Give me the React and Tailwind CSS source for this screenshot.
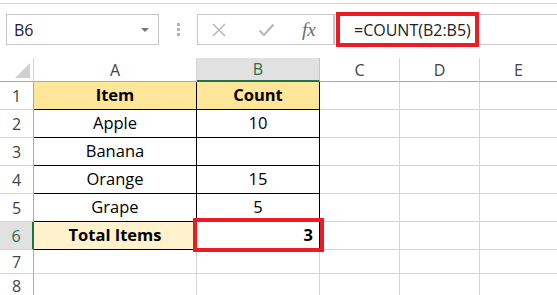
import React from "react";

const font = { fontFamily: '"Open Sans", "Noto Sans", sans-serif' };

const rows = [
  { n: 1, a: "Item", b: "Count", head: true },
  { n: 2, a: "Apple", b: "10" },
  { n: 3, a: "Banana", b: "" },
  { n: 4, a: "Orange", b: "15" },
  { n: 5, a: "Grape", b: "5" },
];

function Empty({ h }) {
  return (
    <>
      <div className={`border-r border-b border-[#d4d4d4] ${h}`} />
      <div className={`border-r border-b border-[#d4d4d4] ${h}`} />
      <div className={`border-b border-[#d4d4d4] ${h}`} />
    </>
  );
}

export default function App() {
  return (
    <div className="w-[557px] h-[295px] overflow-hidden bg-white text-black" style={font}>
      {/* formula bar area */}
      <div className="h-[58px] flex flex-col">
        <div className="h-[4px] border-b border-[#d4d4d4]" />
        <div className="flex items-center pt-[10px] h-[41px]">
          <div className="ml-[6px] w-[153px] h-[31px] border border-[#c6c6c6] flex items-center justify-between pl-[7px] pr-[9px]">
            <span className="text-[16px] text-[#222]">B6</span>
            <span className="w-0 h-0 border-l-[4px] border-r-[4px] border-t-[4px] border-l-transparent border-r-transparent border-t-[#777] mt-[1px]" />
          </div>
          <div className="w-[38px] flex flex-col items-center gap-[2px]">
            <span className="w-[3px] h-[3px] bg-[#b4b4b4]" />
            <span className="w-[3px] h-[3px] bg-[#b4b4b4]" />
            <span className="w-[3px] h-[3px] bg-[#b4b4b4]" />
          </div>
          <div className="w-[137px] h-[31px] border border-[#c6c6c6] flex items-center">
            <svg className="ml-[13px]" width="16" height="16" viewBox="0 0 16 16">
              <path d="M2 2L14 14M14 2L2 14" stroke="#b9b9b9" strokeWidth="1.6" />
            </svg>
            <svg className="ml-[31px]" width="17" height="16" viewBox="0 0 17 16">
              <path d="M1.5 8.5L6 13L15.5 2.5" stroke="#b9b9b9" strokeWidth="2.2" fill="none" />
            </svg>
            <span
              className="ml-[27px] text-[19px] italic text-[#6a6a6a] leading-none"
              style={{ fontFamily: '"Liberation Serif", serif' }}
            >
              fx
            </span>
          </div>
          <div className="relative flex-1 h-[31px] border-y border-l border-[#c6c6c6]">
            <div className="absolute left-[1px] -top-[3px] w-[143px] h-[35px] border-4 border-[#ed1c24] flex items-center pl-[14px]">
              <span className="text-[16px] text-[#222]">=COUNT(B2:B5)</span>
            </div>
          </div>
        </div>
      </div>

      {/* sheet grid */}
      <div className="grid grid-cols-[34px_163px_123px_80px_80px_77px] text-[16.5px]">
        {/* column headers */}
        <div className="h-[24px] border-r border-b border-[#ababab] border-r-[#d4d4d4] pl-[15px] pt-[5px]">
          <svg width="15" height="15" viewBox="0 0 15 15" style={{ display: "block" }}>
            <polygon points="15,0 15,15 0,15" fill="#cfcfcf" />
          </svg>
        </div>
        <div className="h-[24px] border-r border-b border-[#ababab] border-r-[#d4d4d4] flex items-center justify-center text-[16px] text-[#444]">A</div>
        <div className="h-[24px] border-r border-b-2 border-r-[#c6c6c6] border-b-[#217346] bg-[#e1e1e1] flex items-center justify-center text-[16px] text-[#217346]">B</div>
        <div className="h-[24px] border-r border-b border-[#ababab] border-r-[#d4d4d4] flex items-center justify-center text-[16px] text-[#444]">C</div>
        <div className="h-[24px] border-r border-b border-[#ababab] border-r-[#d4d4d4] flex items-center justify-center text-[16px] text-[#444]">D</div>
        <div className="h-[24px] border-b border-[#ababab] flex items-center justify-center text-[16px] text-[#444]">E</div>

        {rows.map((r) => (
          <React.Fragment key={r.n}>
            <div className="h-[28px] border-r border-b border-[#d4d4d4] border-r-[#ababab] flex items-center justify-center text-[16px] text-[#444]">{r.n}</div>
            <div className={`h-[28px] border-r border-b border-black flex items-center justify-center ${r.head ? "bg-[#ffe699] font-bold" : ""}`}>{r.a}</div>
            <div className={`h-[28px] border-r border-b border-black flex items-center justify-center ${r.head ? "bg-[#ffe699] font-bold" : ""}`}>{r.b}</div>
            <Empty h="h-[28px]" />
          </React.Fragment>
        ))}

        {/* row 6 */}
        <div className="h-[28px] border-r-2 border-b border-[#d4d4d4] border-r-[#217346] bg-[#e1e1e1] flex items-center justify-center text-[16px] text-[#217346]">6</div>
        <div className="h-[28px] border-r border-b border-black bg-[#fff2cc] flex items-center justify-center font-bold">Total Items</div>
        <div className="relative h-[28px] border-r border-b border-black flex items-center justify-end pr-[6px] font-bold">
          3
          <div className="absolute -left-[4px] -right-[5px] -top-[4px] -bottom-[3px] border-4 border-[#ed1c24]" />
        </div>
        <Empty h="h-[28px]" />

        {[7, 8].map((n) => (
          <React.Fragment key={n}>
            <div className="h-[24px] border-r border-b border-[#d4d4d4] border-r-[#ababab] flex items-center justify-center text-[16px] text-[#444]">{n}</div>
            <div className="h-[24px] border-r border-b border-[#d4d4d4]" />
            <div className="h-[24px] border-r border-b border-[#d4d4d4]" />
            <Empty h="h-[24px]" />
          </React.Fragment>
        ))}
      </div>
    </div>
  );
}
